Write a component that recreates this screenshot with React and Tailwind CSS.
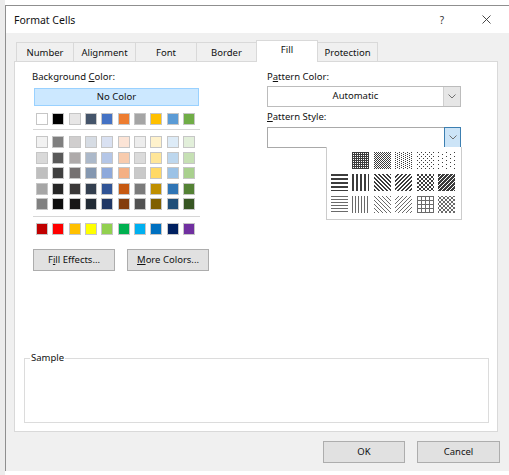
import React from 'react';

const THEME_TOP = ['#FFFFFF', '#000000', '#E7E6E6', '#44546A', '#4472C4', '#ED7D31', '#A5A5A5', '#FFC000', '#5B9BD5', '#70AD47'];
const THEME_SHADES = [
  ['#F2F2F2', '#7F7F7F', '#D0CECE', '#D6DCE4', '#D9E1F2', '#FCE4D6', '#EDEDED', '#FFF2CC', '#DDEBF7', '#E2EFDA'],
  ['#D9D9D9', '#595959', '#AEAAAA', '#ACB9CA', '#B4C6E7', '#F8CBAD', '#DBDBDB', '#FFE699', '#BDD7EE', '#C6E0B4'],
  ['#BFBFBF', '#404040', '#757171', '#8497B0', '#8EA9DB', '#F4B084', '#C9C9C9', '#FFD966', '#9BC2E6', '#A9D08E'],
  ['#A6A6A6', '#262626', '#3A3838', '#333F4F', '#305496', '#C65911', '#7B7B7B', '#BF8F00', '#2F75B5', '#548235'],
  ['#808080', '#0D0D0D', '#171616', '#222B35', '#203764', '#833C0C', '#525252', '#806000', '#1F4E78', '#375623'],
];
const STANDARD = ['#C00000', '#FF0000', '#FFC000', '#FFFF00', '#92D050', '#00B050', '#00B0F0', '#0070C0', '#002060', '#7030A0'];

// pixel masks for the pattern styles (X = dark pixel)
const PATTERNS = [
  [
    null,
    ['XX', 'X.'],
    ['X.', '.X'],
    ['X...', '..X.'],
    ['X...', '....', '..X.', '....'],
    ['X.......', '........', '....X...', '........'],
  ],
  [
    ['X', 'X', '.', '.'],
    ['XX..'],
    ['XX..', '.XX.', '..XX', 'X..X'],
    ['..XX', '.XX.', 'XX..', 'X..X'],
    ['XX..', 'XX..', '..XX', '..XX'],
    ['XXX.', 'XX.X', 'X.XX', '.XXX'],
  ],
  [
    ['X', '.', '.'],
    ['X..'],
    ['X...', '.X..', '..X.', '...X'],
    ['...X', '..X.', '.X..', 'X...'],
    ['XXXX', 'X...', 'X...', 'X...'],
    ['X..X', '.XX.', '.XX.', 'X..X'],
  ],
];
const PATTERN_INK = ['#3c3c3c', '#3c3c3c', '#6a6a6a'];

const TABS = [
  { label: 'Number', w: 'w-[58px]' },
  { label: 'Alignment', w: 'w-[63px]' },
  { label: 'Font', w: 'w-[62px]' },
  { label: 'Border', w: 'w-[61px]' },
  { label: 'Fill', w: 'w-[62px]', active: true },
  { label: 'Protection', w: 'w-[61px]' },
];

function Swatch({ color }) {
  return <div className="w-[12px] h-[12px] border border-[#c6c6c6]" style={{ backgroundColor: color }} />;
}

function SwatchRow({ colors }) {
  return (
    <div className="flex gap-[4.33px]">
      {colors.map((c, i) => <Swatch key={i} color={c} />)}
    </div>
  );
}

function PatternCell({ id, mask, ink }) {
  if (!mask) return <div className="w-[17px] h-[17px]" />;
  const w = mask[0].length;
  const h = mask.length;
  return (
    <svg width="17" height="17" shapeRendering="crispEdges">
      <defs>
        <pattern id={id} width={w} height={h} patternUnits="userSpaceOnUse">
          {mask.flatMap((row, y) =>
            row.split('').map((ch, x) => (ch === 'X' ? <rect key={`${x}-${y}`} x={x} y={y} width="1" height="1" fill={ink} /> : null))
          )}
        </pattern>
      </defs>
      <rect width="17" height="17" fill={`url(#${id})`} />
    </svg>
  );
}

function Chevron() {
  return (
    <svg width="8" height="5" viewBox="0 0 8 5">
      <path d="M0.5 0.5 L4 4 L7.5 0.5" fill="none" stroke="#707070" strokeWidth="1" />
    </svg>
  );
}

function Button({ children, className = '' }) {
  return (
    <div className={`h-[22px] bg-[#e1e1e1] border border-[#adadad] flex items-center justify-center text-[9.5px] text-[#111] ${className}`}>
      {children}
    </div>
  );
}

export default function App() {
  return (
    <div className="w-[509px] h-[475px] bg-white flex overflow-hidden font-['Noto_Sans',sans-serif] text-[#111]">
      {/* sheet behind the dialog */}
      <div className="w-[5px] bg-[#ececec]" />

      <div className="flex-1 mt-[5px] h-[466px] border-l border-t border-[#8f8f8f] flex flex-col">
        {/* Title bar */}
        <div className="h-[27px] bg-white flex items-center pl-[8px]">
          <span className="text-[10.5px] leading-[12px]">Format Cells</span>
          <span className="ml-auto w-[10px] text-center text-[10px] leading-[12px] text-[#333]">?</span>
          <svg className="ml-[35px] mr-[18px]" width="9" height="9" viewBox="0 0 9 9">
            <path d="M0.5 0.5 L8.5 8.5 M8.5 0.5 L0.5 8.5" stroke="#333" strokeWidth="0.9" />
          </svg>
        </div>

        {/* Body */}
        <div className="flex-1 bg-[#f0f0f0] pl-[8px] pt-[7px] flex flex-col">
          {/* Tabs */}
          <div className="flex items-end h-[21px] pl-[2px]">
            {TABS.map((t, i) =>
              t.active ? (
                <div
                  key={t.label}
                  className={`${t.w} h-[22px] -mb-px -ml-px relative z-10 bg-white border border-b-0 border-[#d9d9d9] flex justify-center pt-[3px] text-[9.5px] leading-[12px]`}
                >
                  {t.label}
                </div>
              ) : (
                <div
                  key={t.label}
                  className={`${t.w} h-[19px] ${i ? '-ml-px' : ''} bg-[#f0f0f0] border border-b-0 border-[#d9d9d9] flex items-center justify-center pt-px text-[9.5px] leading-[12px]`}
                >
                  {t.label}
                </div>
              )
            )}
          </div>

          {/* Panel */}
          <div className="w-[484px] h-[371px] bg-white border border-[#d9d9d9] flex flex-col">
            <div className="flex pt-[9px] pl-[17px]">
              {/* Background colour */}
              <div className="w-[235px] flex flex-col">
                <div className="text-[9.5px] leading-[12px]">
                  Background <span className="underline underline-offset-1">C</span>olor:
                </div>
                <div className="ml-[2px] mt-[5px] w-[165px] h-[18px] bg-[#cce8ff] border border-[#99d1ff] flex items-center justify-center text-[9.5px]">
                  No Color
                </div>
                <div className="ml-[4px] mt-[7px]">
                  <SwatchRow colors={THEME_TOP} />
                </div>
                <div className="ml-[1px] mt-[4px] w-[167px] h-px bg-[#d6d6d6]" />
                <div className="ml-[4px] mt-[6px] flex flex-col gap-[3.5px]">
                  {THEME_SHADES.map((row, i) => <SwatchRow key={i} colors={row} />)}
                </div>
                <div className="ml-[1px] mt-[6px] w-[167px] h-px bg-[#d6d6d6]" />
                <div className="ml-[4px] mt-[6px]">
                  <SwatchRow colors={STANDARD} />
                </div>
                <div className="ml-[1px] mt-[14px] flex gap-[12px]">
                  <Button className="w-[82px] h-[21px]">
                    F<span className="underline underline-offset-1">i</span>ll Effects...
                  </Button>
                  <Button className="w-[82px] h-[21px]">
                    <span className="underline underline-offset-1">M</span>ore Colors...
                  </Button>
                </div>
              </div>

              {/* Pattern */}
              <div className="w-[194px] flex flex-col">
                <div className="text-[9.5px] leading-[12px]">
                  P<span className="underline underline-offset-1">a</span>ttern Color:
                </div>
                <div className="mt-[3px] h-[21px] bg-white border border-[#bcbcbc] flex">
                  <div className="flex-1 flex items-center justify-center text-[9.5px]">Automatic</div>
                  <div className="w-[17px] bg-[#e6e6e6] border-l border-[#cfcfcf] flex items-center justify-center">
                    <Chevron />
                  </div>
                </div>
                <div className="mt-[4px] text-[9.5px] leading-[12px]">
                  <span className="underline underline-offset-1">P</span>attern Style:
                </div>
                <div className="relative mt-[4px] h-[21px] bg-white border border-[#a9a9a9] flex">
                  <div className="flex-1" />
                  <div className="w-[17px] -my-px -mr-px bg-[#cce4f7] border border-[#3c7fb1] flex items-center justify-center">
                    <Chevron />
                  </div>

                  {/* open pattern list */}
                  <div className="absolute top-full left-[58px] w-[136px] h-[73px] bg-white border border-[#cccccc] border-t-0 pt-[5px] pl-[4px] flex flex-col gap-[5px]">
                    {PATTERNS.map((row, r) => (
                      <div key={r} className="flex gap-[4.4px]">
                        {row.map((mask, c) => <PatternCell key={c} id={`pat-${r}-${c}`} mask={mask} ink={PATTERN_INK[r]} />)}
                      </div>
                    ))}
                  </div>
                </div>
              </div>
            </div>

            {/* Sample */}
            <div className="mt-auto mb-[8px] ml-[9px] w-[465px] h-[65px] border border-[#dcdcdc] relative">
              <span className="absolute -top-[7px] left-[5px] bg-white px-px text-[9.5px] leading-[12px]">Sample</span>
            </div>
          </div>

          {/* Dialog buttons */}
          <div className="mt-[9px] pr-[9px] flex justify-end gap-[12px]">
            <Button className="w-[82px]">OK</Button>
            <Button className="w-[83px]">Cancel</Button>
          </div>
        </div>
      </div>
    </div>
  );
}
